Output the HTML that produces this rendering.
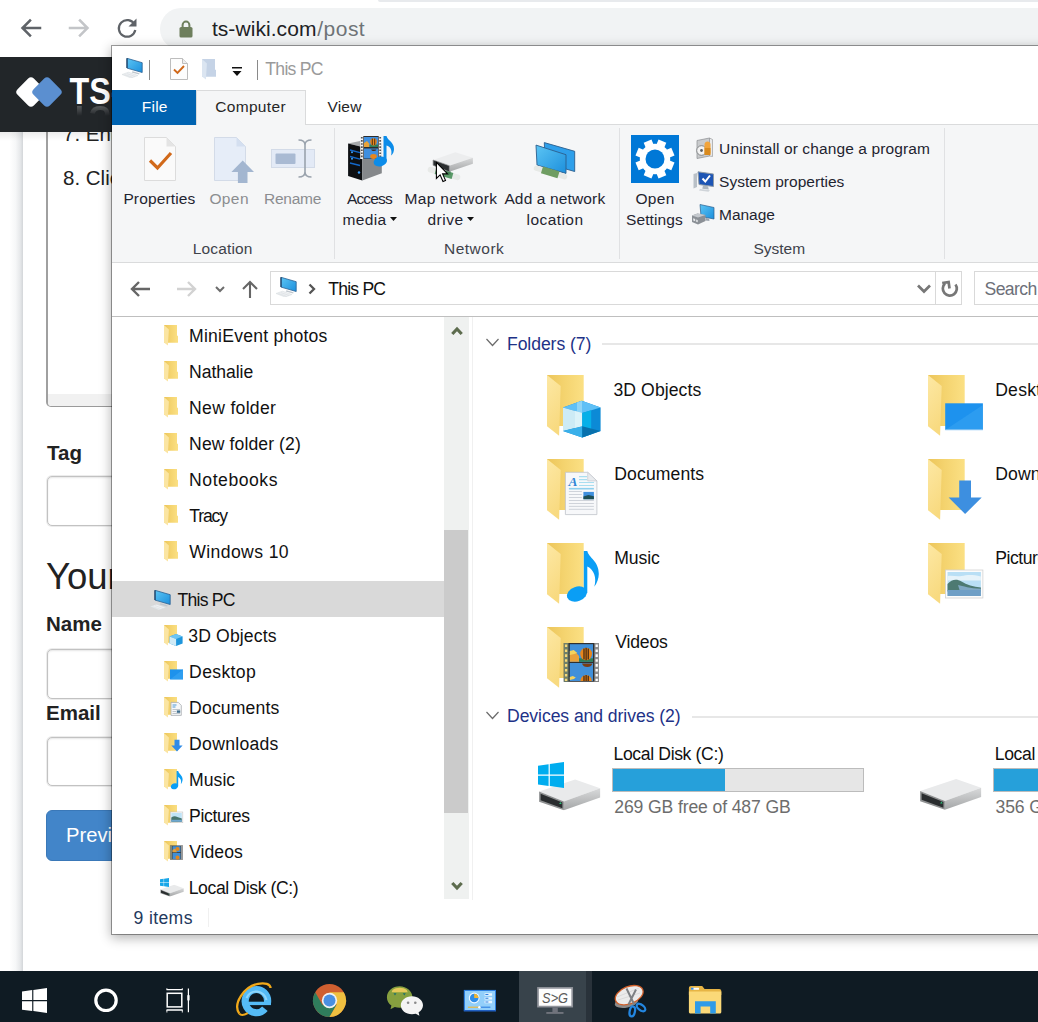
<!DOCTYPE html>
<html lang="en">
<head>
<meta charset="utf-8">
<title>ts-wiki post</title>
<style>
*{box-sizing:border-box;margin:0;padding:0}
html,body{width:1038px;height:1022px;overflow:hidden;background:#fff}
body{position:relative;font-family:"Liberation Sans",sans-serif;color:#000}
.abs{position:absolute}
.t{position:absolute;white-space:nowrap;line-height:1}
svg{position:absolute;overflow:visible}
/* ---------- chrome toolbar ---------- */
#chrome{left:0;top:0;width:1038px;height:57px;background:#fff}
#tabstrip{left:378px;top:0;width:661px;height:2px;background:#e8eaed;border-radius:0 0 0 8px}
#omni{left:160px;top:8px;width:900px;height:42px;background:#f1f3f4;border-radius:21px}
/* ---------- web page ---------- */
#navbar{left:0;top:57px;width:200px;height:75px;background:#222629}
#pageshadow{left:0;top:131px;width:23px;height:840px;background:linear-gradient(90deg,#fff 0,#fff 42%,#f6f7f8 68%,#e6e8ea 88%,#d3d6d9 100%)}
.pg{font-family:"Liberation Sans",sans-serif;color:#212121}
.inp{position:absolute;left:47px;width:200px;height:50px;border:1px solid #c2c2c2;border-radius:5px;background:#fff;box-shadow:inset 0 1px 2px rgba(0,0,0,.1),0 0 0 1px #ececec}
/* ---------- explorer ---------- */
#win{left:112px;top:46px;width:940px;height:888px;background:#fff;box-shadow:0 0 0 1px rgba(0,0,0,.36),0 3px 11px 1px rgba(0,0,0,.3)}
#ribbon{left:0;top:78px;width:940px;height:139px;background:#f5f6f7;border-bottom:1px solid #dadbdc}
#tabline{left:84px;top:78px;width:860px;height:1px;background:#dadbdc}
#filetab{left:0;top:44px;width:84px;height:35px;background:#0063b1}
#comptab{left:84px;top:44px;width:110px;height:35px;background:#f5f6f7;border:1px solid #dadbdc;border-bottom:none}
.rb{font-size:15.6px;color:#1f2430}
.rbd{font-size:15.6px;color:#8b8d90}
.rbg{font-size:15.6px;color:#3f434b}
.vsep{position:absolute;top:82px;width:1px;height:131px;background:#e0e1e3}
/* nav + content */
.nv{font-size:17.4px;color:#111}
#sel{left:0;top:535px;width:332px;height:36px;background:#d9d9d9}
#sbar{left:332px;top:271px;width:25px;height:582px;background:#eff1f0}
#thumb{left:332px;top:484px;width:24px;height:283px;background:#cbcbcb}
.hd{font-size:17.4px;color:#1e3287}
.hl{position:absolute;height:2px;background:#e7e7e7}
/* taskbar */
#taskbar{left:0;top:971px;width:1038px;height:51px;background:#0f1b23}
#tbactive{left:519px;top:971px;width:67px;height:51px;background:#38434b}
</style>
</head>
<body>

<svg width="0" height="0" style="left:0;top:0">
 <defs>
  <linearGradient id="gFold" x1="0" y1="0" x2="1" y2="0"><stop offset="0" stop-color="#ecc55a"/><stop offset=".45" stop-color="#f4d36e"/><stop offset="1" stop-color="#fbe084"/></linearGradient>
  <linearGradient id="gFlap" x1="0" y1="0" x2="0.3" y2="1"><stop offset="0" stop-color="#fde8a4"/><stop offset="1" stop-color="#f8da80"/></linearGradient>
  <linearGradient id="gMon" x1="0" y1="0" x2="1" y2="1"><stop offset="0" stop-color="#5cc5f4"/><stop offset="1" stop-color="#1c8fdc"/></linearGradient>
  <linearGradient id="gDrv" x1="0" y1="0" x2="0" y2="1"><stop offset="0" stop-color="#d9dadb"/><stop offset="1" stop-color="#a4a6a7"/></linearGradient>
  <!-- small nav folder 18x22 : open-folder side view -->
  <symbol id="sfold" viewBox="0 0 15 21">
    <path d="M0 0h13v10.8h1v6.9H0z" fill="url(#gFold)"/>
    <path d="M0 0 4.9 4.4 3.9 20.6 0 17.4z" fill="#fbe5a2"/>
  </symbol>
  <!-- big folder 56x66 -->
  <symbol id="bfold" viewBox="0 0 38 62">
    <path d="M0 0h36.7v50.9H0z" fill="url(#gFold)"/>
    <path d="M0 0 13.7 11 12.1 60.7 0 51.3z" fill="url(#gFlap)"/>
  </symbol>
  <!-- pc icon 24x20 -->
  <symbol id="pc" viewBox="0 0 22 20">
    <path d="M5 .3 20.2 4.7v9.8L5 10.1z" fill="url(#gMon)" stroke="#2a5f92" stroke-width=".8"/>
    <path d="M5 .3v9.8" stroke="#1d3f63" stroke-width="1.2"/>
    <path d="M10.5 13.3l7 2-.3 1.3-7.5-2.1z" fill="#bfc6cd"/>
    <path d="M0 16.5 6.5 14.200 16 17.5 9 20z" fill="#eef0f2" stroke="#d3d8dd" stroke-width=".5"/>
    <path d="M2.5 16.6l8 2.7M5 15.7l8 2.7" stroke="#d3d8dd" stroke-width=".5"/>
  </symbol>
  <!-- drive 60x34 -->
  <symbol id="drv" viewBox="0 0 63 32">
    <path d="M1.1 13.1 37.1.9 62.1 9.8 25.9 22.9z" fill="#e9eaeb"/>
    <path d="M25.9 22.9 62.1 9.8V19L25.9 31.7z" fill="url(#gDrv)"/>
    <path d="M1.1 13.1 25.9 22.9v8.8L1.1 23.200z" fill="#8f9192"/>
    <path d="M2.6 15.3 24.4 24v5.7L2.6 21.7z" fill="#2a2d2f"/>
    <path d="M22.4 23.6l1.3 2h-2.6z" fill="#2fc07a"/>
  </symbol>
  <symbol id="winlogo" viewBox="0 0 26 26">
    <path d="M0 3.7 10.6 2.2v10.3H0zM11.8 2 26 0v12.5H11.8zM0 13.7h10.6V24L0 22.5zM11.8 13.7H26V26l-14.2-2z"/>
  </symbol>
 </defs>
</svg>
<!-- CHROME TOOLBAR -->
<div id="chrome" class="abs">
  <div id="tabstrip" class="abs"></div>
  <div id="omni" class="abs"></div>

  <svg style="left:19px;top:16.3px" width="120" height="24" viewBox="0 0 120 24" fill="none" stroke-linecap="square">
    <path d="M21 12H4M11 4.5 3.5 12 11 19.5" stroke="#5f6368" stroke-width="2.5"/>
    <path d="M51 12H68M61 4.5 68.5 12 61 19.5" stroke="#c3c5c8" stroke-width="2.5"/>
    <path d="M115.5 8.5A8.3 8.3 0 1 0 116.3 14" stroke="#5f6368" stroke-width="2.2" stroke-linecap="butt"/>
    <path d="M117.5 2.5v8h-8z" fill="#5f6368" stroke="none"/>
  </svg>
  <svg style="left:179px;top:20px" width="14" height="18" viewBox="0 0 14 18">
    <rect x="0.5" y="7" width="13" height="10.5" rx="1.6" fill="#6e7f5d"/>
    <path d="M3.6 7.5V5a3.4 3.4 0 0 1 6.8 0v2.5" fill="none" stroke="#6e7f5d" stroke-width="2"/>
  </svg>
  <div class="t" style="left:211.9px;top:18px;font-size:21px;color:#202124;letter-spacing:.07px">ts-wiki.com</div>
  <div class="t" style="left:317.3px;top:18px;font-size:21px;color:#6f7377;letter-spacing:.47px">/post</div>
</div>
<!-- WEB PAGE -->
<div id="pageshadow" class="abs"></div>
<div id="page" class="abs pg" style="left:0;top:0;width:200px;height:970px">
  <!-- textarea -->
  <div class="abs" style="left:46px;top:100px;width:200px;height:307px;border:1px solid #9a9a9a;border-left:2px solid #a0a0a0;border-radius:0 0 0 5px;background:#fff"></div>
  <div class="abs" style="left:48px;top:394px;width:200px;height:12px;background:#f1f1f1;border-radius:0 0 0 4px"></div>
  <div class="t" style="left:63px;top:124px;font-size:20.5px;color:#222">7. Enter</div>
  <div class="t" style="left:63px;top:168px;font-size:20.5px;color:#222">8. Click</div>
  <div class="t" style="left:47px;top:443px;font-size:20.5px;font-weight:bold;color:#222">Tag</div>
  <div class="inp" style="top:476px"></div>
  <div class="t" style="left:46px;top:559px;font-size:36.5px;color:#222">Your</div>
  <div class="t" style="left:46px;top:614px;font-size:20.5px;font-weight:bold;color:#222">Name</div>
  <div class="inp" style="top:649px"></div>
  <div class="t" style="left:46px;top:703px;font-size:20.5px;font-weight:bold;color:#222">Email</div>
  <div class="inp" style="top:737px;height:49px"></div>
  <div class="abs" style="left:46px;top:810px;width:200px;height:51px;background:#4285c9;border-radius:6px;border:1px solid #3a78b8"></div>
  <div class="t" style="left:66px;top:825px;font-size:20.2px;color:#fff">Preview</div>
</div>
<div id="navbar" class="abs">
  <div class="abs" style="left:0;top:75px;width:111px;height:9px;background:linear-gradient(180deg,rgba(0,0,0,.08),rgba(0,0,0,0))"></div>
  <!-- logo -->
  <svg style="left:12px;top:13px" width="100" height="48" viewBox="0 0 100 48">
    <rect x="7.5" y="10.5" width="23" height="23" rx="4" transform="rotate(45 19 22)" fill="#fff"/>
    <rect x="23.5" y="10.5" width="23" height="23" rx="4" transform="rotate(45 35 22)" fill="#5b8fd0"/>
    <defs><linearGradient id="gRefl" x1="0" y1="0" x2="0" y2="1"><stop offset="0" stop-color="#fff" stop-opacity="0"/><stop offset=".55" stop-color="#fff" stop-opacity="0"/><stop offset="1" stop-color="#fff" stop-opacity=".45"/></linearGradient></defs>
    <text x="57.5" y="34" font-family="Liberation Sans, sans-serif" font-weight="bold" font-size="37" fill="#fff" textLength="52" lengthAdjust="spacingAndGlyphs">TS-</text>
    <text x="57.5" y="34" font-family="Liberation Sans, sans-serif" font-weight="bold" font-size="37" fill="url(#gRefl)" textLength="52" lengthAdjust="spacingAndGlyphs" transform="translate(0 69.5) scale(1 -1)" style="filter:blur(.6px)">TS-</text>
  </svg>
</div>
<!-- EXPLORER WINDOW -->
<div id="win" class="abs">
  <div id="ribbon" class="abs"></div>
  <div id="filetab" class="abs"></div>
  <div id="tabline" class="abs"></div>
  <div id="comptab" class="abs"></div>

<!--RIBBON-START-->
  <!-- title bar (win coords: page x-112, y-46) -->
  <svg style="left:9px;top:12px" width="24" height="20"><use href="#pc" width="24" height="20"/></svg>
  <div class="abs" style="left:37px;top:14px;width:1px;height:20px;background:#8a8a8a"></div>
  <svg style="left:57.5px;top:12px" width="18" height="22" viewBox="0 0 18 22">
    <path d="M.5.5h12l5 5v16H.5z" fill="#fdfdfd" stroke="#bdbdbd"/><path d="M12.5.5v5h5" fill="#eee" stroke="#bdbdbd"/>
    <path d="M4 11.5l3.5 3.5 6.5-7" fill="none" stroke="#d0681a" stroke-width="1.9"/>
  </svg>
  <svg style="left:89.5px;top:13px" width="15" height="21" viewBox="0 0 15 21"><path d="M0 0h13v10.8h1v6.9H0z" fill="#c5d3e6"/><path d="M0 0 4.9 4.4 3.9 20.6 0 17.4z" fill="#dbe5f1"/></svg>
  <svg style="left:120px;top:21px" width="10" height="9" viewBox="0 0 10 9"><path d="M0 0h10v1.5H0zM0.5 4h9L5 9z" fill="#111"/></svg>
  <div class="abs" style="left:145px;top:14px;width:1px;height:20px;background:#8a8a8a"></div>
  <div class="t " style="left:153.3px;top:15px;font-size:17.6px;letter-spacing:-0.72px;color:#9a9a9a;">This PC</div>
  <!-- tabs -->
  <div class="t " style="left:29.8px;top:53px;font-size:15.5px;letter-spacing:0.23px;color:#fff;">File</div>
  <div class="t " style="left:103.2px;top:53px;font-size:15.5px;letter-spacing:0.33px;color:#262626;">Computer</div>
  <div class="t " style="left:215.5px;top:53px;font-size:15.5px;letter-spacing:0.17px;color:#262626;">View</div>
  <!-- ribbon -->
  <div class="vsep" style="left:222px"></div>
  <div class="vsep" style="left:506.5px"></div>
  <div class="vsep" style="left:832px"></div>
  <div class="t rb" style="left:11.4px;top:145px;font-size:15.5px;letter-spacing:0.13px;">Properties</div>
  <div class="t rbd" style="left:97.4px;top:145px;font-size:15.5px;letter-spacing:0.40px;">Open</div>
  <div class="t rbd" style="left:152.0px;top:145px;font-size:15.5px;letter-spacing:-0.26px;">Rename</div>
  <div class="t rbg" style="left:80.8px;top:195px;font-size:15.5px;letter-spacing:0.14px;">Location</div>
  <div class="t rb" style="left:234.9px;top:145px;font-size:15.5px;letter-spacing:-0.82px;">Access</div>
  <div class="t rb" style="left:230.4px;top:166px;font-size:15.5px;letter-spacing:0.40px;">media</div>
  <div class="t rb" style="left:292.4px;top:145px;font-size:15.5px;letter-spacing:0.38px;">Map network</div>
  <div class="t rb" style="left:315.4px;top:166px;font-size:15.5px;letter-spacing:0.55px;">drive</div>
  <div class="t rb" style="left:392.4px;top:145px;font-size:15.5px;letter-spacing:0.14px;">Add a network</div>
  <div class="t rb" style="left:414.6px;top:166px;font-size:15.5px;letter-spacing:0.43px;">location</div>
  <div class="t rbg" style="left:332.1px;top:195px;font-size:15.5px;letter-spacing:0.47px;">Network</div>
  <div class="t rb" style="left:523.5px;top:145px;font-size:15.5px;letter-spacing:0.30px;">Open</div>
  <div class="t rb" style="left:514.0px;top:166px;font-size:15.5px;letter-spacing:0.09px;">Settings</div>
  <div class="t rb" style="left:607.1px;top:95px;font-size:15.5px;letter-spacing:0.11px;">Uninstall or change a program</div>
  <div class="t rb" style="left:607.1px;top:128px;font-size:15.5px;letter-spacing:0.02px;">System properties</div>
  <div class="t rb" style="left:607.1px;top:161px;font-size:15.5px;letter-spacing:-0.06px;">Manage</div>
  <div class="t rbg" style="left:641.5px;top:195px;font-size:15.5px;letter-spacing:-0.02px;">System</div>
  <svg style="left:277.5px;top:170.5px" width="7" height="4" viewBox="0 0 7 4"><path d="M0 0h7L3.5 4z" fill="#111"/></svg>
  <svg style="left:354.7px;top:170.5px" width="7" height="4" viewBox="0 0 7 4"><path d="M0 0h7L3.5 4z" fill="#111"/></svg>
  <svg style="left:32px;top:91px" width="32" height="44" viewBox="0 0 32 44">
    <path d="M.5.5h22l9 9v34H.5z" fill="#fafafa" stroke="#dcdcdc"/><path d="M22.5.5v9h9z" fill="#e4e4e4"/>
    <path d="M6 23.5l7.5 7.5L27 16" fill="none" stroke="#d1691a" stroke-width="3.2"/>
  </svg>
  <svg style="left:102px;top:91px" width="41" height="47" viewBox="0 0 41 47">
    <path d="M.5.5h22l9 9v34H.5z" fill="#e6edf8" stroke="#d3dbe8"/><path d="M22.5.5v9h9z" fill="#d4dff0"/>
    <path d="M28.7 23.5 40 35h-6.5v11h-9.6V35H17.4z" fill="#a3b6d0"/>
  </svg>
  <svg style="left:159px;top:93px" width="44" height="40" viewBox="0 0 44 40">
    <rect x=".5" y="10.5" width="43" height="18" fill="#e3eaf6" stroke="#d3dbe8"/>
    <rect x="4.5" y="14.5" width="20" height="10.5" rx="1" fill="#a9bad3"/>
    <path d="M27.5 1c4 0 6.5 1.5 6.5 5v27c0 3.5-2.5 5-6.5 5M40.5 1c-4 0-6.5 1.5-6.5 5v27c0 3.5 2.5 5 6.5 5" fill="none" stroke="#9aa3ad" stroke-width="1.6"/>
  </svg>
  <svg style="left:235px;top:88px" width="48" height="48" viewBox="0 0 48 48">
    <path d="M1.1 9.5 13 7l21.8 2.5L15.3 13z" fill="#a6a9ac"/>
    <path d="M1.1 9.5 15.3 13v33.6L1.1 41.9z" fill="#0d0f12"/>
    <path d="M15.3 13 34.8 9.5v29.7L15.3 46.6z" fill="#85888b"/>
    <path d="M3 16l10 2.7M3 22.5l10 2.7M3 29l10 2.5" stroke="#1467c8" stroke-width="1.3"/>
    <circle cx="5" cy="18.2" r="1" fill="#3aa0ff"/><circle cx="5" cy="24.7" r="1" fill="#3aa0ff"/><circle cx="12" cy="38.5" r="1.2" fill="#3aa0ff"/>
    <rect x="13.2" y="2" width="21.6" height="23" fill="#f4f4f4"/>
    <path d="M14.8 3v21M33.2 3v21" stroke="#555" stroke-width="1.8" stroke-dasharray="1.6 1.5"/>
    <rect x="16.3" y="2" width="15.4" height="23" fill="#2d2d2d"/>
    <rect x="17" y="3" width="14" height="10" fill="#3f8fe0"/><rect x="17" y="14.5" width="14" height="10" fill="#3f8fe0"/>
    <path d="M17 9l3-2 2.5 3v3H17z" fill="#e8a33a"/><path d="M22.5 10.5H31V13h-8.5z" fill="#2f7f5a"/>
    <ellipse cx="26.5" cy="7.8" rx="3.3" ry="3.6" fill="#e8861c"/><path d="M25.3 4.5v6.5M27.7 4.5v6.5" stroke="#2b1a10" stroke-width=".8"/>
    <ellipse cx="26.5" cy="22.5" rx="3.3" ry="2.4" fill="#e8861c"/><path d="M24 15.5a3 2.5 0 0 0 5.5 0z" fill="#4a2a12"/>
    <path d="M36.5 2h3c1 4.5 7.5 6 7.5 13 0 2.5-1 5-3 6.5 1.5-5-.5-9-4.5-10V27h-3z" fill="#0c8ce9"/>
    <ellipse cx="33.3" cy="27.5" rx="6.8" ry="4.8" transform="rotate(-15 33.3 27.5)" fill="#0c8ce9"/>
  </svg>
  <svg style="left:315px;top:104px" width="48" height="32" viewBox="0 0 48 32">
    <path d="M3.5 19.7 30.5 27.3" stroke="#e8eae8" stroke-width="5.6" stroke-linecap="round"/>
    <path d="M8.5 21.1 25.5 25.9" stroke="#5a9a68" stroke-width="6.2"/>
    <path d="M19 19.5l4.5 1.3v4L19 23.5z" fill="#3f7f50"/>
    <path d="M6.1 10 28.3 2.3 45.9 7.7 22.3 15.7z" fill="#ecedee"/>
    <path d="M22.3 15.7 45.9 7.7v6L22.3 21.8z" fill="url(#gDrv)"/>
    <path d="M6.1 10l16.2 5.7v6.1L6.1 15.3z" fill="#2c2f31"/>
    <path d="M6.1 10l16.2 5.7v6.1L6.1 15.3z" fill="none" stroke="#8f9192" stroke-width=".7"/>
  </svg>
  <svg style="left:323px;top:115px" width="14" height="22" viewBox="0 0 14 22">
    <path d="M1.4 1.4v16l3.7-3.5 2.9 6.6 2.5-1.1-2.9-6.5h5z" fill="#fff" stroke="#000" stroke-width="1.1" stroke-linejoin="miter"/>
  </svg>
  <svg style="left:422px;top:95px" width="44" height="40" viewBox="0 0 44 40">
    <path d="M10.3 1.6 40.7 10.3v20.2L11 22z" fill="#2e9fea" stroke="#2b5d8c" stroke-width=".9"/>
    <path d="M2 4.1 32 13.7v18.7L3 24.1z" fill="url(#gMon)" stroke="#2b5d8c" stroke-width=".9"/>
    <path d="M2.5 27.2 30.5 35.7" stroke="#e6e9e6" stroke-width="5.4" stroke-linecap="round"/>
    <path d="M8 28.8 24.5 33.9" stroke="#6f9d62" stroke-width="7"/>
  </svg>
  <svg style="left:519px;top:89px" width="48" height="48" viewBox="0 0 48 48">
    <rect width="48" height="48" fill="#0078d7"/>
    <circle cx="24" cy="24" r="15.2" fill="#fff"/><rect x="19.8" y="4.6" width="8.4" height="9" transform="rotate(22.5 24 24)" fill="#fff"/><rect x="19.8" y="4.6" width="8.4" height="9" transform="rotate(67.5 24 24)" fill="#fff"/><rect x="19.8" y="4.6" width="8.4" height="9" transform="rotate(112.5 24 24)" fill="#fff"/><rect x="19.8" y="4.6" width="8.4" height="9" transform="rotate(157.5 24 24)" fill="#fff"/><rect x="19.8" y="4.6" width="8.4" height="9" transform="rotate(202.5 24 24)" fill="#fff"/><rect x="19.8" y="4.6" width="8.4" height="9" transform="rotate(247.5 24 24)" fill="#fff"/><rect x="19.8" y="4.6" width="8.4" height="9" transform="rotate(292.5 24 24)" fill="#fff"/><rect x="19.8" y="4.6" width="8.4" height="9" transform="rotate(337.5 24 24)" fill="#fff"/>
    <circle cx="24" cy="24" r="9.5" fill="#0078d7"/>
  </svg>
  <svg style="left:580px;top:91px" width="23" height="23" viewBox="0 0 23 23">
    <path d="M5 3.5 17.5 1v18L5 21.5z" fill="#c9cbcd" stroke="#8b8d90" stroke-width=".7"/><path d="M17.5 1l3 1.5v17l-3-.5z" fill="#e9eaeb" stroke="#8b8d90" stroke-width=".6"/>
    <circle cx="9.5" cy="13.5" r="4.8" fill="#f3f3f3" stroke="#6f7275" stroke-width=".8"/><circle cx="9.5" cy="13.5" r="1.4" fill="#5c5f62"/>
    <path d="M12.5 7.5c0-2 1.5-3 3-3s3 1 3 3v9h-6z" fill="#f2a43a"/><path d="M12.5 11h6v7h-6z" fill="#d98a1e"/>
  </svg>
  <svg style="left:580px;top:125px" width="23" height="21" viewBox="0 0 23 21">
    <path d="M6 .8 21.5 3v12.5L7 13.5z" fill="#1d55b5" stroke="#8e9aa6" stroke-width="1"/>
    <path d="M10.5 7.5l2.8 3 4.7-6" fill="none" stroke="#fff" stroke-width="2"/>
    <path d="M11 14.5l5 .8.8 3.2-6.5-.8z" fill="#aeb6be"/><path d="M8 18l10 1.3-1.5 1.5-9.5-1.3z" fill="#cfd4d9"/>
    <path d="M1.5 3 5 2v14l-3.5 1.5z" fill="#b9c0c7"/>
  </svg>
  <svg style="left:580px;top:157px" width="23" height="22" viewBox="0 0 23 22">
    <path d="M8 1.5 22 4.5V16L9 13.5z" fill="url(#gMon)" stroke="#2b5d8c" stroke-width=".7"/>
    <path d="M14 15l3 .6.5 2.5-4-.5z" fill="#9aa3ad"/>
    <path d="M0 12.5l5.5-2 8 1.5v6l-7.5 3.5-6-2.5z" fill="#8b9096"/><path d="M0 12.5l5.5-2 8 1.5-7.5 2.5z" fill="#c5c9ce"/>
    <path d="M1.2 15.3l2 .8v2.2l-2-.8zM4.2 16.5l1.5.6v2.2l-1.5-.6z" fill="#e9ebed"/>
  </svg>
<!--RIBBON-END-->
<!--BODY-START-->
  <!-- address bar -->
  <div class="abs" style="left:0;top:270px;width:940px;height:1px;background:#bfbfbf"></div>
  <svg style="left:18px;top:234px" width="130" height="18" viewBox="0 0 130 18" fill="none">
    <path d="M20 9H2M9 2 2 9l7 7" stroke="#666" stroke-width="2.4"/>
    <path d="M47 9H65M58 2l7 7-7 7" stroke="#d2d2d2" stroke-width="2.4"/>
    <path d="M86 7l4 4 4-4" stroke="#6d6d6d" stroke-width="2"/>
    <path d="M120 18V2M113 9l7-7 7 7" stroke="#666" stroke-width="2.1"/>
  </svg>
  <div class="abs" style="left:158px;top:225px;width:692px;height:34px;border:1px solid #d9d9d9;background:#fff"></div>
  <div class="abs" style="left:823px;top:225px;width:1px;height:34px;background:#d9d9d9"></div>
  <svg style="left:164px;top:231px" width="22" height="20"><use href="#pc" width="22" height="20"/></svg>
  <svg style="left:196px;top:237px" width="8" height="12" viewBox="0 0 8 12"><path d="M1.5 1.5 6 6l-4.5 4.5" fill="none" stroke="#555" stroke-width="2.3"/></svg>
  <div class="t nv" style="left:216.2px;top:235px;font-size:17.6px;letter-spacing:-0.78px;">This PC</div>
  <svg style="left:805px;top:238px" width="14" height="9" viewBox="0 0 14 9"><path d="M1 1.5 7 7.5l6-6" fill="none" stroke="#777" stroke-width="2.7"/></svg>
  <svg style="left:829px;top:234px" width="18" height="18" viewBox="0 0 18 18" fill="none">
    <path d="M4 3.5A7 7 0 1 0 14.5 4.5" stroke="#777" stroke-width="2.7"/><path d="M1.5 2.5h6.5v6.5" stroke="#777" stroke-width="2.7" transform="rotate(-8 5 5)"/>
  </svg>
  <div class="abs" style="left:862px;top:225px;width:120px;height:34px;border:1px solid #d9d9d9;background:#fff"></div>
  <div class="t nv" style="left:872.5px;top:235px;font-size:17.6px;letter-spacing:-0.60px;color:#6d7079;">Search</div>
  <!-- nav pane -->
  <div id="sel" class="abs"></div>
  <div id="sbar" class="abs"></div>
  <div id="thumb" class="abs"></div>
  <svg style="left:337.5px;top:279px" width="14" height="11" viewBox="0 0 14 11"><path d="M2.3 9 7 4l4.7 5" fill="none" stroke="#5d6c4e" stroke-width="3.2"/></svg>
  <svg style="left:337.5px;top:834.5px" width="14" height="11" viewBox="0 0 14 11"><path d="M2.3 2 7 7l4.7-5" fill="none" stroke="#5d6c4e" stroke-width="3.2"/></svg>
  <svg style="left:52px;top:279px" width="20" height="22" viewBox="0 0 20 22"><use href="#sfold" x="0" y="0" width="15" height="21"/></svg>
  <div class="t nv" style="left:77.1px;top:282px;font-size:17.6px;letter-spacing:0.22px;">MiniEvent photos</div>
  <svg style="left:52px;top:315px" width="20" height="22" viewBox="0 0 20 22"><use href="#sfold" x="0" y="0" width="15" height="21"/></svg>
  <div class="t nv" style="left:77.1px;top:318px;font-size:17.6px;letter-spacing:-0.06px;">Nathalie</div>
  <svg style="left:52px;top:351px" width="20" height="22" viewBox="0 0 20 22"><use href="#sfold" x="0" y="0" width="15" height="21"/></svg>
  <div class="t nv" style="left:77.1px;top:354px;font-size:17.6px;letter-spacing:0.30px;">New folder</div>
  <svg style="left:52px;top:387px" width="20" height="22" viewBox="0 0 20 22"><use href="#sfold" x="0" y="0" width="15" height="21"/></svg>
  <div class="t nv" style="left:77.1px;top:390px;font-size:17.6px;letter-spacing:0.09px;">New folder (2)</div>
  <svg style="left:52px;top:423px" width="20" height="22" viewBox="0 0 20 22"><use href="#sfold" x="0" y="0" width="15" height="21"/></svg>
  <div class="t nv" style="left:77.1px;top:426px;font-size:17.6px;letter-spacing:0.53px;">Notebooks</div>
  <svg style="left:52px;top:459px" width="20" height="22" viewBox="0 0 20 22"><use href="#sfold" x="0" y="0" width="15" height="21"/></svg>
  <div class="t nv" style="left:77.3px;top:462px;font-size:17.6px;letter-spacing:-1.15px;">Tracy</div>
  <svg style="left:52px;top:495px" width="20" height="22" viewBox="0 0 20 22"><use href="#sfold" x="0" y="0" width="15" height="21"/></svg>
  <div class="t nv" style="left:77.3px;top:498px;font-size:17.6px;letter-spacing:0.39px;">Windows 10</div>
  <svg style="left:38px;top:543.5px" width="22" height="20"><use href="#pc" width="22" height="20"/></svg>
  <div class="t nv" style="left:65.6px;top:546px;font-size:17.6px;letter-spacing:-0.78px;">This PC</div>
  <svg style="left:52px;top:579px" width="20" height="22" viewBox="0 0 20 22"><use href="#sfold" x="0" y="0" width="15" height="21"/><path d="M5.6 11.6l6.5-2.6 6.5 2.6v6.8l-6.5 2.6-6.5-2.6z" fill="#1e96dc"/><path d="M5.6 11.6l6.5 2.3 6.5-2.3-6.5-2.6z" fill="#6cc5f5"/><path d="M5.6 11.6l6.5 2.3v7.1l-6.5-2.6z" fill="#cfeaf6"/></svg>
  <div class="t nv" style="left:76.3px;top:582px;font-size:17.6px;letter-spacing:0.13px;">3D Objects</div>
  <svg style="left:52px;top:615px" width="20" height="22" viewBox="0 0 20 22"><use href="#sfold" x="0" y="0" width="15" height="21"/><rect x="6" y="8.4" width="13" height="10" fill="#1d92ec"/><path d="M6 18.4 19 8.4v10z" fill="#3ba6f4" opacity=".6"/></svg>
  <div class="t nv" style="left:77.1px;top:618px;font-size:17.6px;letter-spacing:0.35px;">Desktop</div>
  <svg style="left:52px;top:651px" width="20" height="22" viewBox="0 0 20 22"><use href="#sfold" x="0" y="0" width="15" height="21"/><path d="M7 5.4h7.3l3 3v10H7z" fill="#f6f7f8" stroke="#a9adb3" stroke-width=".8"/><path d="M8.5 8h4M8.5 10h3" stroke="#4f9ad6" stroke-width="1.1"/><path d="M8.5 12.5h7.5M8.5 14.5h3.5M8.5 16.5h7.5" stroke="#b9bec5" stroke-width=".9"/><rect x="12.8" y="13.4" width="3.4" height="2.4" fill="#3f6f8f"/></svg>
  <div class="t nv" style="left:77.1px;top:654px;font-size:17.6px;letter-spacing:0.15px;">Documents</div>
  <svg style="left:52px;top:687px" width="20" height="22" viewBox="0 0 20 22"><use href="#sfold" x="0" y="0" width="15" height="21"/><path d="M10.5 6.8h5v5.6h3.1L13 18.6 7.3 12.4h3.2z" fill="#2f8be6"/></svg>
  <div class="t nv" style="left:77.1px;top:690px;font-size:17.6px;letter-spacing:0.28px;">Downloads</div>
  <svg style="left:52px;top:723px" width="20" height="22" viewBox="0 0 20 22"><use href="#sfold" x="0" y="0" width="15" height="21"/><path d="M12.6 2h1.6c.5 2.8 4.4 4.3 4.4 8.3 0 2-.8 3.7-1.8 5 1-3.2-.2-6.2-2.6-7.3v9a3.8 2.9 -20 1 1-1.6-2.5z" fill="#0a9ef5"/></svg>
  <div class="t nv" style="left:77.1px;top:726px;font-size:17.6px;letter-spacing:0.02px;">Music</div>
  <svg style="left:52px;top:759px" width="20" height="22" viewBox="0 0 20 22"><use href="#sfold" x="0" y="0" width="15" height="21"/><rect x="6.3" y="7" width="12.5" height="10.7" fill="#fbfbfb" stroke="#c4c4c4" stroke-width=".6"/><rect x="7.3" y="8" width="10.5" height="8.7" fill="#bfe3f6"/><path d="M7.3 12.5c2-1.6 4-1.8 6-.6l4.5 1.6v3.2H7.3z" fill="#48766f"/><path d="M7.3 14.8h10.5v1.9H7.3z" fill="#6ea7cf"/></svg>
  <div class="t nv" style="left:77.1px;top:762px;font-size:17.6px;letter-spacing:-0.37px;">Pictures</div>
  <svg style="left:52px;top:795px" width="20" height="22" viewBox="0 0 20 22"><use href="#sfold" x="0" y="0" width="15" height="21"/><rect x="6.1" y="4.5" width="12.8" height="14.1" fill="#3a3a3a"/><rect x="6.1" y="4.5" width="1.8" height="14.1" fill="#8c8f7a"/><rect x="17.1" y="4.5" width="1.8" height="14.1" fill="#a5a5a5"/><rect x="8.5" y="5.2" width="8" height="6" fill="#3f8fd8"/><rect x="8.5" y="12" width="8" height="6" fill="#3f8fd8"/><circle cx="13.5" cy="8" r="2.1" fill="#e0861f"/><path d="M8.5 9l2.5-1.5 2 3.7H8.5z" fill="#e4a03a"/><circle cx="13.5" cy="16.5" r="2" fill="#e0861f"/></svg>
  <div class="t nv" style="left:77.2px;top:798px;font-size:17.6px;letter-spacing:0.02px;">Videos</div>
  <svg style="left:48px;top:832px" width="24" height="19" viewBox="0 0 24 19"><use href="#drv" x="0" y="6.5" width="24" height="12.2"/><use href="#winlogo" x="0" y="0" width="9" height="9" fill="#19a6e8"/></svg>
  <div class="t nv" style="left:76.7px;top:834px;font-size:17.6px;letter-spacing:-0.38px;">Local Disk (C:)</div>
  <div class="t nv" style="left:21.5px;top:864px;font-size:17.6px;letter-spacing:0.37px;color:#23395d;">9 items</div>
  <div class="abs" style="left:96px;top:862px;width:1px;height:19px;background:#f0f0f0"></div>
  <!-- content -->
  <div class="abs" style="left:360px;top:271px;width:1px;height:583px;background:#f0f0f0"></div>
  <svg style="left:374px;top:291.8px" width="13" height="9" viewBox="0 0 13 9"><path d="M.5 1l6 6.5L12.5 1" fill="none" stroke="#6b6b6b" stroke-width="1.2"/></svg>
  <div class="t hd" style="left:395.0px;top:290px;font-size:17.6px;letter-spacing:-0.08px;">Folders (7)</div>
  <div class="hl" style="left:490px;top:297px;width:500px"></div>
  <svg style="left:374px;top:664.8px" width="13" height="9" viewBox="0 0 13 9"><path d="M.5 1l6 6.5L12.5 1" fill="none" stroke="#6b6b6b" stroke-width="1.2"/></svg>
  <div class="t hd" style="left:395.0px;top:662px;font-size:17.6px;letter-spacing:-0.07px;">Devices and drives (2)</div>
  <div class="hl" style="left:580px;top:670px;width:500px"></div>
  <svg style="left:435px;top:329px" width="62" height="64" viewBox="0 0 62 64"><use href="#bfold" x="0" y="0" width="38" height="62"/><path d="M16 32.5 34.8 25.8 53.6 32.5V56L35.2 62.6 16 56z" fill="#0c8ad6"/><path d="M16 32.5 34.8 25.8 53.6 32.5 35.2 38z" fill="#5fc0f6"/><path d="M30 27.5l5-1.7v12.1l-5-1.5z" fill="#8ed4f7"/><path d="M16 32.5 35.2 38v13.3L16 56z" fill="#cdebf5"/><path d="M28 36l7.2 2v13.3L28 53z" fill="#dcf3f9"/><path d="M35.2 38l9-2.7V59.3l-9 3.3z" fill="#06b0e8"/><path d="M16 56l19.2-4.7V62.6z" fill="#3ab0ea"/><path d="M35.2 51.3 53.6 56 35.2 62.6z" fill="#0871ad"/></svg>
  <div class="t nv" style="left:501.5px;top:336px;font-size:17.6px;letter-spacing:0.08px;">3D Objects</div>
  <svg style="left:435px;top:413px" width="62" height="64" viewBox="0 0 62 64"><use href="#bfold" x="0" y="0" width="38" height="62"/><path d="M18.4 13.3h22.3l9.2 8.6v33.7H18.4z" fill="#f7f8fa" stroke="#bfc3c9" stroke-width=".8"/><path d="M40.7 13.3v8.6h9.2z" fill="#e9ebee" stroke="#bfc3c9" stroke-width=".6"/><text x="21.5" y="26.6" font-size="13.5" font-style="italic" font-weight="bold" fill="#2f86d6" font-family="Liberation Serif, serif">A</text><path d="M32 17.6h8M32 20.6h8M32 23.5h15M32 26.5h15" stroke="#a9def0" stroke-width="1.1"/><path d="M21.9 29.7h25" stroke="#8fd0ee" stroke-width="1.6"/><path d="M21.9 32.5h13M21.9 35.5h13M21.9 38.5h13M21.9 41.5h25M21.9 44.5h25M21.9 47.4h25M21.9 50.3h25" stroke="#c9ced6" stroke-width=".9"/><rect x="36.4" y="32.9" width="10.5" height="7.3" fill="#3f8fdd"/><path d="M36.4 37.5l5-1.5 5.5 1.2v3h-10.5z" fill="#1e4f55"/></svg>
  <div class="t nv" style="left:502.3px;top:420px;font-size:17.6px;letter-spacing:0.11px;">Documents</div>
  <svg style="left:435px;top:497px" width="62" height="64" viewBox="0 0 62 64"><use href="#bfold" x="0" y="0" width="38" height="62"/><path d="M36.8 8h3.5c1.5 7 11.6 10 11.5 23-.1 5-1.8 9-4.5 12.8 2.7-8.8-.3-17.3-7-20.3V50h-3.5z" fill="#0a9ef5"/><ellipse cx="30" cy="51" rx="10.4" ry="7.3" transform="rotate(-20 30 51)" fill="#0a9ef5"/></svg>
  <div class="t nv" style="left:502.3px;top:504px;font-size:17.6px;letter-spacing:-0.10px;">Music</div>
  <svg style="left:435px;top:581px" width="62" height="64" viewBox="0 0 62 64"><use href="#bfold" x="0" y="0" width="38" height="62"/><rect x="16.8" y="16" width="35.2" height="38.8" fill="#303030"/><rect x="16.8" y="16" width="4.7" height="38.8" fill="#6f7f6a"/><rect x="47.3" y="16" width="4.7" height="38.8" fill="#8e8e8e"/><path d="M19.1 17.5v36.5" stroke="#f7d878" stroke-width="2.3" stroke-dasharray="2.6 2.3"/><path d="M49.7 17.5v36.5" stroke="#fff" stroke-width="2.3" stroke-dasharray="2.6 2.3"/><rect x="22.8" y="17.2" width="23.2" height="17.6" fill="#4190d9"/><rect x="22.8" y="36" width="23.2" height="18" fill="#4190d9"/><path d="M22.8 27l4-3 2.5 2 2.7 3v5.8h-9.2z" fill="#e9a23c"/><path d="M22.8 24l4-1 3.5 3-3 1-4.5 1z" fill="#f4d35e"/><rect x="32" y="31.3" width="14" height="3.5" fill="#2f7f5a"/><ellipse cx="39.1" cy="27" rx="5.9" ry="6.3" fill="#e8861c"/><path d="M37 21.5v11M39.1 20.7v12.5M41.2 21.5v11" stroke="#2b1a10" stroke-width="1.1"/><path d="M34 28a5.5 5 0 0 0 10.5 0z" fill="#7a3d14" transform="translate(1 8.5)"/><path d="M33.4 54a5.7 6 0 0 1 11.4 0z" fill="#e8861c"/><path d="M37 48.8v5.2M39.1 48v6M41.2 48.8v5.2" stroke="#2b1a10" stroke-width="1.1"/><path d="M22.8 50l3-1 3 1.5-2 1.5-4 1z" fill="#f4d35e"/></svg>
  <div class="t nv" style="left:503.3px;top:588px;font-size:17.6px;letter-spacing:-0.18px;">Videos</div>
  <svg style="left:815.8px;top:329px" width="62" height="64" viewBox="0 0 62 64"><use href="#bfold" x="0" y="0" width="38" height="62"/><rect x="17.2" y="28.3" width="37.7" height="26.7" fill="#1d92ee"/><path d="M17.2 55 54.9 30v25z" fill="#39a4f3" opacity=".55"/><path d="M17.2 54.3h37.7v.9H17.2z" fill="#8fc8f5"/></svg>
  <div class="t nv" style="left:883.2px;top:336px;font-size:17.6px;letter-spacing:0.23px;">Desktop</div>
  <svg style="left:815.8px;top:413px" width="62" height="64" viewBox="0 0 62 64"><use href="#bfold" x="0" y="0" width="38" height="62"/><path d="M31.2 21.4H43V38.5h10.7L37.1 55 20.6 38.5h10.6z" fill="#3d8fe0"/></svg>
  <div class="t nv" style="left:883.2px;top:420px;font-size:17.6px;letter-spacing:0.16px;">Downloads</div>
  <svg style="left:815.8px;top:497px" width="62" height="64" viewBox="0 0 62 64"><use href="#bfold" x="0" y="0" width="38" height="62"/><rect x="17.5" y="27" width="37.4" height="28" fill="#fcfcfc" stroke="#d2d2d2" stroke-width=".8"/><rect x="19.5" y="29" width="33.4" height="24" fill="#b9dff5"/><path d="M19.5 33c5-1 9 1 14 0s10-2 19.4.5v4H19.5z" fill="#e6f3fa"/><path d="M19.5 41c4-4.5 9-5.5 14-2.5 5 3 12 5.5 19.4 6v4H19.5z" fill="#4d7a72"/><path d="M30 42c5 1 12 3.5 22.9 3.8v2.7H32z" fill="#7fa8c4"/><path d="M19.5 47h33.4v6H19.5z" fill="#6f9fc6"/></svg>
  <div class="t nv" style="left:883.2px;top:504px;font-size:17.6px;letter-spacing:-0.46px;">Pictures</div>
  <svg style="left:426px;top:715.5px" width="63" height="50" viewBox="0 0 63 50"><use href="#drv" x="0" y="16.5" width="63" height="32"/><use href="#winlogo" x="0" y="0" width="26" height="26" fill="#00adef"/></svg>
  <div class="t nv" style="left:501.5px;top:700px;font-size:17.6px;letter-spacing:-0.36px;">Local Disk (C:)</div>
  <div class="abs" style="left:500px;top:722px;width:252px;height:24px;border:1px solid #bcbcbc;background:#e6e6e6"></div>
  <div class="abs" style="left:501px;top:723px;width:112px;height:22px;background:#26a0da"></div>
  <div class="t nv" style="left:502.3px;top:753px;font-size:17.6px;letter-spacing:-0.13px;color:#6d6d6d;">269 GB free of 487 GB</div>
  <svg style="left:807px;top:732px" width="63" height="33" viewBox="0 0 63 33"><use href="#drv" x="0" y="0" width="63" height="32"/></svg>
  <div class="t nv" style="left:882.7px;top:700px;font-size:17.6px;letter-spacing:-0.34px;">Local Disk (D:)</div>
  <div class="abs" style="left:881px;top:722px;width:252px;height:24px;border:1px solid #bcbcbc;background:#e6e6e6"></div>
  <div class="abs" style="left:882px;top:723px;width:80px;height:22px;background:#26a0da"></div>
  <div class="t nv" style="left:883.5px;top:753px;font-size:17.6px;letter-spacing:-0.12px;color:#6d6d6d;">356 GB free of 443 GB</div>
<!--BODY-END-->
</div>
<!--TASK-START-->
<div id="taskbar" class="abs"></div>
<div id="tbactive" class="abs"></div>
<div class="abs" style="left:586px;top:971px;width:6px;height:51px;background:#29323a"></div>
<svg style="left:22px;top:988px" width="25" height="25" viewBox="0 0 26 26"><use href="#winlogo" width="26" height="26" fill="#fff"/></svg>
<svg style="left:93px;top:987px" width="26" height="26" viewBox="0 0 26 26"><circle cx="13" cy="13.3" r="10.2" fill="none" stroke="#fff" stroke-width="3.2"/></svg>
<svg style="left:165px;top:988px" width="26" height="25" viewBox="0 0 26 25" fill="none" stroke="#fff">
  <rect x="2.2" y="5.3" width="14.6" height="13.6" stroke-width="1.5"/>
  <path d="M1.5 1.6h16.2M1.5 22h16.2" stroke-width="1.3"/>
  <path d="M1.9 22v2.5M17.3 22v2.5M1.9 1.6V.2M17.3 1.6V.2" stroke-width=".9"/>
  <path d="M23.4.6v23.6" stroke-width="1.2"/><rect x="22.3" y="7.2" width="2.3" height="5.2" fill="#fff" stroke="none"/>
</svg>
<svg style="left:236px;top:981px" width="38" height="38" viewBox="236 981 38 38" fill="none">
  <path d="M267.5 1002.7A11.2 11.6 0 1 0 264.9 1008.7" stroke="#55bbf6" stroke-width="7.2"/>
  <path d="M247 1003.4h24" stroke="#55bbf6" stroke-width="3.4"/>
  <path d="M266.5 1000A10.5 10.5 0 0 0 246.5 998" stroke="#a6e2ff" stroke-width="2.2" opacity=".7"/>
  <path d="M239.3 1013.6C232.5 1004 244 986.5 258 983.8 265 982.5 270.3 984 270.6 988" stroke="#f1a91a" stroke-width="2.3"/>
  <path d="M239.3 1013.6c1.5 2 5 1.5 8.5-.5" stroke="#f1a91a" stroke-width="2"/>
</svg>
<svg style="left:312.9px;top:984.1px" width="33" height="33" viewBox="-16.5 -16.5 33 33">
  <circle r="16.5" fill="#cf5f30"/>
  <path d="M-14.290 -8.250A16.5 16.5 0 0 0 0 16.5L7.140 4.130-7.140 4.130z" fill="#2f7d5c"/>
  <path d="M0 16.5A16.5 16.5 0 0 0 14.290-8.250H0L7.140 4.130z" fill="#efc040"/>
  <circle r="7.7" fill="#f1f1f1"/><circle r="6" fill="#4a8fe2"/>
</svg>
<svg style="left:386px;top:985px" width="38" height="32" viewBox="386 985 38 32">
  <path d="M399.6 986.2c-7.1 0-12.7 4.9-12.7 11 0 3.4 1.7 6.4 4.5 8.4l-.9 3.6 4.3-2.2c1.5.5 3.1.7 4.8.7 7.1 0 12.8-4.7 12.8-10.5s-5.7-11-12.8-11z" fill="#86a03f"/>
  <path d="M392.5 990c2-1.5 4.5-2.3 7.1-2.3s5.2.8 7.2 2.3l.9 2.2h-16z" fill="#e6c95a"/>
  <path d="M393.5 993.3h3l-1.5 2.2zM402.8 993.3h3l-1.5 2.2z" fill="#1f6f6a"/>
  <path d="M412 996.2c-6.2 0-11.2 4-11.2 9s5 9 11.2 9c1.3 0 2.6-.2 3.8-.5l3.6 2-.8-3.4c2.7-1.7 4.4-4.2 4.4-7.1 0-5-5-9-11-9z" fill="#f4f4f4"/>
  <circle cx="408.1" cy="1002.8" r="1.3" fill="#8a8a8a"/><circle cx="415.3" cy="1002.8" r="1.3" fill="#8a8a8a"/>
</svg>
<svg style="left:463px;top:989px" width="34" height="23" viewBox="463 989 34 23">
  <rect x="463.8" y="989.9" width="32.2" height="21.4" fill="#2d7fe0"/>
  <rect x="465" y="991" width="30" height="19" fill="#92cffa"/>
  <path d="M463.8 1010.3h32.2v1h-32.2z" fill="#1c55b8"/>
  <circle cx="474.2" cy="998" r="5.4" fill="#f3f9ff"/><circle cx="474.2" cy="998" r="4.3" fill="#2f8de8"/><path d="M474.2 998v-4.3a4.3 4.3 0 0 1 4.3 4.3z" fill="#f2b631"/>
  <path d="M484.6 994.5h7.5M484.6 998.3h7.5M484.6 1002h7.5" stroke="#e8f5ff" stroke-width="2.3"/><path d="M485.4 994.5h3M485.4 998.3h3M485.4 1002h3" stroke="#2d7fe0" stroke-width="1.1"/>
  <path d="M467.9 1007.2h11.5" stroke="#f2b631" stroke-width="1.1"/><path d="M479.4 1007.2h11" stroke="#2d7fe0" stroke-width="1.1"/><circle cx="479.4" cy="1007.2" r="1.2" fill="#fff"/>
</svg>
<svg style="left:536px;top:986px" width="38" height="29" viewBox="536 986 38 29">
  <rect x="538" y="987.9" width="34.2" height="18.7" fill="#fdfdfd" stroke="#90939a" stroke-width="1.7"/>
  <text x="555.1" y="1003" text-anchor="middle" font-family="Liberation Sans, sans-serif" font-style="italic" font-size="14" fill="#5a5a5a" textLength="26" lengthAdjust="spacingAndGlyphs">S&gt;G</text>
  <path d="M552.4 1007.4h5.4v5h-5.4z" fill="#70737c"/><path d="M546.3 1012h17.2v1.9h-17.2z" fill="#70737c"/>
</svg>
<svg style="left:612px;top:982px" width="36" height="38" viewBox="612 982 36 38">
  <ellipse cx="626.5" cy="1002" rx="12" ry="5.5" transform="rotate(-12 626.5 1002)" fill="#8b8b8b"/>
  <ellipse cx="629.2" cy="995.2" rx="14.6" ry="8.6" transform="rotate(-22 629.2 995.2)" fill="#ebebeb" stroke="#d1602a" stroke-width="1.3"/>
  <path d="M617 997l22-9M618 1000l22-7" stroke="#d6d6d6" stroke-width=".8"/>
  <path d="M626.5 988.5 634.5 1005M636 989.5 628.5 1004.5" stroke="#7d8084" stroke-width="2"/>
  <ellipse cx="632.3" cy="1011.4" rx="2.6" ry="5" transform="rotate(12 632.3 1011.4)" stroke="#2386e0" stroke-width="2.3" fill="none"/>
  <ellipse cx="641" cy="1007.5" rx="2.7" ry="5" transform="rotate(-52 641 1007.5)" stroke="#2386e0" stroke-width="2.3" fill="none"/>
</svg>
<svg style="left:688px;top:985px" width="34" height="30" viewBox="688 985 34 30">
  <path d="M688.9 988.1c0-1.1.9-2 2-2h11.3l2.4 3h14.7c1.1 0 2 .9 2 2v4h-32.4z" fill="#e7b545"/>
  <rect x="691" y="987.7" width="8" height="2" rx=".5" fill="#fff"/>
  <rect x="691" y="987.7" width="2.5" height="2" fill="#3a8ee6"/>
  <path d="M688.9 991.5h32.4v20.4c0 .8-.7 1.5-1.5 1.5h-29.4c-.8 0-1.5-.7-1.5-1.5z" fill="#fbd978"/>
  <path d="M695 1001.3h20.8v12.1h-5.6v-7h-9.6v7H695z" fill="#2f9be8"/>
</svg>
<!--TASK-END-->
</body>
</html>
